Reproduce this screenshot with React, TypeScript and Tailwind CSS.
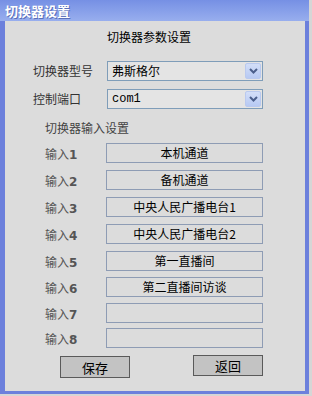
import React from "react";

const cjk = { fontFamily: '"Noto Sans CJK SC", "Liberation Sans", sans-serif' };

function Chevron() {
  return (
    <svg width="9" height="6" viewBox="0 0 9 6">
      <path d="M1 1 L4.5 4.5 L8 1" stroke="#4b5f8c" strokeWidth="2" fill="none" />
    </svg>
  );
}

function Select({ value, mono }: { value: string; mono?: boolean }) {
  return (
    <div className="flex h-[20px] w-[156px] items-center border border-[#7f9db9] bg-[#e4e4e4] pl-[4px] pr-[1px]">
      <span
        className="flex-1 text-[12px] leading-none text-black"
        style={mono ? { fontFamily: '"Liberation Mono", monospace' } : cjk}
      >
        {value}
      </span>
      <div className="flex h-[16px] w-[16px] items-center justify-center rounded-[2px] border border-[#b9c9ef] bg-gradient-to-b from-[#d3def8] to-[#b7c9f3]">
        <Chevron />
      </div>
    </div>
  );
}

const inputs = [
  { n: "1", v: "本机通道", mt: "mt-[8px]" },
  { n: "2", v: "备机通道", mt: "mt-[7px]" },
  { n: "3", v: "中央人民广播电台1", mt: "mt-[7px]" },
  { n: "4", v: "中央人民广播电台2", mt: "mt-[7px]" },
  { n: "5", v: "第一直播间", mt: "mt-[7px]" },
  { n: "6", v: "第二直播间访谈", mt: "mt-[6px]" },
  { n: "7", v: "", mt: "mt-[6px]" },
  { n: "8", v: "", mt: "mt-[5px]" },
];

export default function App() {
  return (
    <div className="h-[396px] w-[312px] overflow-hidden bg-[#d6d6d6]" style={cjk}>
      <div className="flex h-[394px] w-[309px] flex-col bg-[#6c80dc]">
        <div className="flex h-[21px] items-center bg-gradient-to-b from-[#7690e4] to-[#98aeee] pl-[5px]">
          <span className="text-[13px] font-bold leading-none text-white [text-shadow:1px_1px_0_#5a6fb8]">切换器设置</span>
        </div>
        <div className="ml-[5px] mr-[4px] h-[370px] bg-[#dcdcdc]">
          <div className="ml-[102px] mt-[8px] text-[12px] leading-[15px] text-black">切换器参数设置</div>
          <div className="mt-[17px] flex items-center">
            <span className="ml-[28px] w-[74px] text-[12px] leading-none text-[#333]">切换器型号</span>
            <Select value="弗斯格尔" />
          </div>
          <div className="mt-[8px] flex items-center">
            <span className="ml-[28px] w-[74px] text-[12px] leading-none text-[#333]">控制端口</span>
            <Select value="com1" mono />
          </div>
          <div className="ml-[40px] mt-[11px] text-[12px] leading-[15px] text-[#444]">切换器输入设置</div>
          {inputs.map((r) => (
            <div key={r.n} className={`flex items-center ${r.mt}`}>
              <span className="ml-[40px] w-[61px] pt-[2px] text-[12px] leading-none text-[#555]">
                输入<span className="font-bold" style={{ fontFamily: '"DejaVu Sans", sans-serif' }}>{r.n}</span>
              </span>
              <div className="flex h-[20px] w-[157px] items-center justify-center border border-[#8e9cb4] text-[12px] leading-none text-black">
                {r.v}
              </div>
            </div>
          ))}
          <div className="mt-[7px] flex items-start">
            <button className="ml-[55px] mt-[1px] h-[22px] w-[70px] border border-[#5a5a5a] bg-[#c3c3c3] text-[13px] leading-none text-black">
              保存
            </button>
            <button className="ml-[63px] h-[21px] w-[70px] border border-[#5a5a5a] bg-[#c3c3c3] text-[13px] leading-none text-black">
              返回
            </button>
          </div>
        </div>
      </div>
    </div>
  );
}
